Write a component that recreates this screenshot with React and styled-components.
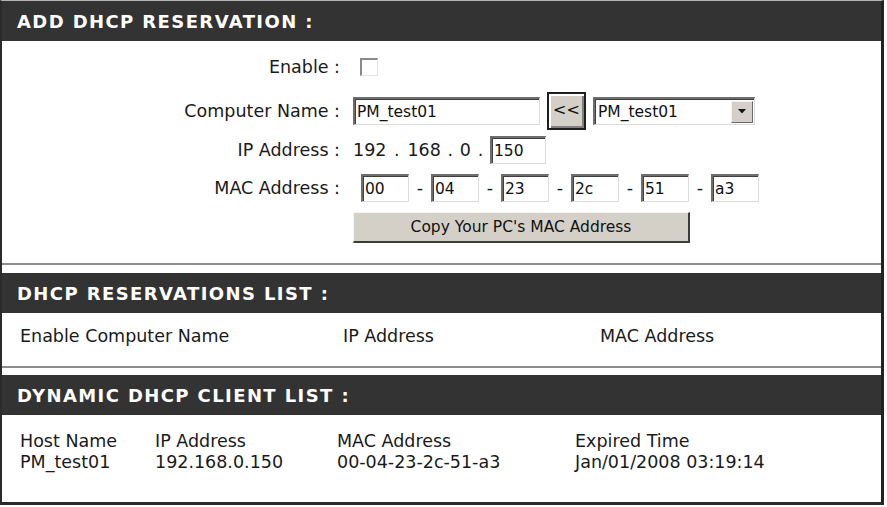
import React from 'react';
import styled, { createGlobalStyle } from 'styled-components';

const GlobalStyle = createGlobalStyle`
  html, body {
    margin: 0;
    padding: 0;
    background: #ffffff;
  }

  body {
    font-family: "DejaVu Sans", Verdana, sans-serif;
    color: #1a1a1a;
  }
`;

const Frame = styled.div`
  width: 879px;
  border-top: 1px solid #b5b5b5;
  border-left: 2px solid #2b2b2b;
  border-right: 3px solid #222222;
  border-bottom: 3px solid #2b2b2b;
  background: #ffffff;
`;

const Header = styled.div`
  height: 40px;
  display: flex;
  align-items: center;
  padding-left: 15px;
  background: #333333;
  color: #ffffff;
  font-family: "DejaVu Sans", Verdana, sans-serif;
  font-weight: bold;
  font-size: 18px;
  letter-spacing: 1.4px;
  white-space: nowrap;
`;

const Body = styled.div`
  height: ${({ $h }) => $h}px;
  padding-top: ${({ $pt }) => $pt || 0}px;
  box-sizing: border-box;
  border-bottom: ${({ $last }) => ($last ? 'none' : '2px solid #8c8c8c')};
  margin-bottom: ${({ $gap }) => $gap || 0}px;
`;

const FormRow = styled.div`
  height: ${({ $h }) => $h}px;
  display: grid;
  grid-template-columns: 338px 1fr;
  column-gap: 13px;
  align-items: center;
  font-size: 17.5px;
`;

const Label = styled.span`
  text-align: right;
  white-space: nowrap;
`;

const Controls = styled.div`
  display: flex;
  align-items: center;
  gap: ${({ $gap }) => $gap || 0}px;
  padding-left: ${({ $pl }) => $pl || 0}px;
  white-space: nowrap;
`;

const TextBox = styled.div`
  width: ${({ $w }) => $w}px;
  height: 28px;
  box-sizing: border-box;
  display: flex;
  align-items: center;
  padding-left: 2px;
  background: #ffffff;
  border-top: 2px solid #6e6e6e;
  border-left: 2px solid #6e6e6e;
  border-bottom: 1px solid #dcdcdc;
  border-right: 1px solid #dcdcdc;
  box-shadow: inset 1px 1px 0 #404040;
  font-size: 15.5px;
  color: #111111;
`;

const CheckBox = styled.div`
  width: 18px;
  height: 18px;
  margin-left: 7px;
  box-sizing: border-box;
  background: #ffffff;
  border-top: 2px solid #8a8a8a;
  border-left: 2px solid #8a8a8a;
  border-bottom: 1px solid #e4e4e4;
  border-right: 1px solid #e4e4e4;
`;

const ArrowButton = styled.div`
  width: 39px;
  height: 38px;
  box-sizing: border-box;
  display: flex;
  align-items: center;
  justify-content: center;
  padding-bottom: 3px;
  border: 2px solid #1e1e1e;
  background: #d4d0c8;
  box-shadow: inset 2px 2px 0 #ffffff, inset -2px -2px 0 #808080;
  font-size: 16px;
  color: #111111;
`;

const Select = styled.div`
  width: 162px;
  height: 28px;
  box-sizing: border-box;
  display: flex;
  align-items: center;
  justify-content: space-between;
  padding-left: 3px;
  padding-right: 1px;
  background: #ffffff;
  border-top: 2px solid #6e6e6e;
  border-left: 2px solid #6e6e6e;
  border-bottom: 1px solid #dcdcdc;
  border-right: 1px solid #dcdcdc;
  box-shadow: inset 1px 1px 0 #404040;
  font-size: 15.5px;
  color: #111111;
`;

const DropButton = styled.div`
  width: 22px;
  height: 22px;
  box-sizing: border-box;
  display: flex;
  align-items: center;
  justify-content: center;
  background: #d4d0c8;
  border-top: 1px solid #f2f2f2;
  border-left: 1px solid #f2f2f2;
  border-bottom: 1px solid #6a6a6a;
  border-right: 1px solid #6a6a6a;
`;

const Dot = styled.span`
  display: inline-block;
  width: ${({ $w }) => $w}px;
  text-align: center;
`;

const CopyButton = styled.div`
  width: 337px;
  height: 31px;
  box-sizing: border-box;
  display: flex;
  align-items: center;
  justify-content: center;
  background: #d4d0c8;
  border-top: 1px solid #f4f4f4;
  border-left: 1px solid #f4f4f4;
  border-bottom: 2px solid #3c3c3c;
  border-right: 2px solid #3c3c3c;
  font-size: 15.5px;
  color: #111111;
`;

const ListRow = styled.div`
  display: grid;
  grid-template-columns: ${({ $cols }) => $cols};
  height: ${({ $h }) => $h}px;
  align-items: center;
  padding-left: 18px;
  font-size: 17.5px;
  white-space: nowrap;
`;

const macParts = ['00', '04', '23', '2c', '51', 'a3'];

const Triangle = () => (
  <svg width="8" height="5" viewBox="0 0 8 5">
    <path d="M0 0 H8 L4 4.5 Z" fill="#111" />
  </svg>
);

const clientCols = '135px 182px 238px 1fr';

const App = () => {
  return (
    <>
      <GlobalStyle />
      <Frame>
        <Header>ADD DHCP RESERVATION :</Header>
        <Body $h={224} $pt={6} $gap={8}>
          <FormRow $h={40}>
            <Label>Enable :</Label>
            <Controls>
              <CheckBox />
            </Controls>
          </FormRow>
          <FormRow $h={48}>
            <Label>Computer Name :</Label>
            <Controls $gap={7}>
              <TextBox $w={187}>PM_test01</TextBox>
              <ArrowButton>&lt;&lt;</ArrowButton>
              <Select>
                PM_test01
                <DropButton>
                  <Triangle />
                </DropButton>
              </Select>
            </Controls>
          </FormRow>
          <FormRow $h={30}>
            <Label>IP Address :</Label>
            <Controls>
              192<Dot $w={21}>.</Dot>168<Dot $w={19}>.</Dot>0<Dot $w={19}>.</Dot>
              <TextBox $w={56}>150</TextBox>
            </Controls>
          </FormRow>
          <FormRow $h={46}>
            <Label>MAC Address :</Label>
            <Controls $pl={8}>
              {macParts.map((part, idx) => (
                <React.Fragment key={part + idx}>
                  {idx > 0 && <Dot $w={22}>-</Dot>}
                  <TextBox $w={48}>{part}</TextBox>
                </React.Fragment>
              ))}
            </Controls>
          </FormRow>
          <FormRow $h={32}>
            <span />
            <Controls>
              <CopyButton>Copy Your PC's MAC Address</CopyButton>
            </Controls>
          </FormRow>
        </Body>

        <Header>DHCP RESERVATIONS LIST :</Header>
        <Body $h={55} $gap={7}>
          <ListRow $cols="323px 257px 1fr" $h={46}>
            <span>Enable Computer Name</span>
            <span>IP Address</span>
            <span>MAC Address</span>
          </ListRow>
        </Body>

        <Header>DYNAMIC DHCP CLIENT LIST :</Header>
        <Body $h={87} $pt={15} $last>
          <ListRow $cols={clientCols} $h={21}>
            <span>Host Name</span>
            <span>IP Address</span>
            <span>MAC Address</span>
            <span>Expired Time</span>
          </ListRow>
          <ListRow $cols={clientCols} $h={21}>
            <span>PM_test01</span>
            <span>192.168.0.150</span>
            <span>00-04-23-2c-51-a3</span>
            <span>Jan/01/2008 03:19:14</span>
          </ListRow>
        </Body>
      </Frame>
    </>
  );
};

export default App;
